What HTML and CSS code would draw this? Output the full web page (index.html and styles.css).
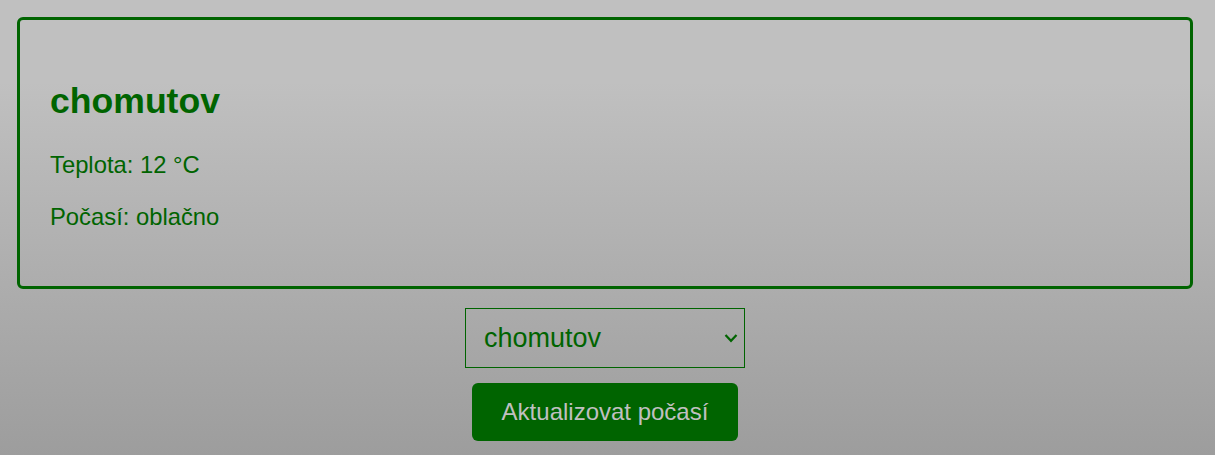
FILE: index.html
```html
<!DOCTYPE html>
<html lang="cs">
<head>
<meta charset="utf-8">
<title>Počasí</title>
<link rel="stylesheet" href="styles.css">
</head>
<body>
<main class="page">
  <section class="card">
    <h1 class="city">chomutov</h1>
    <p class="line">Teplota: 12 °C</p>
    <p class="line">Počasí: oblačno</p>
  </section>
  <div class="picker-wrap">
    <select class="picker">
      <option selected>chomutov</option>
      <option>praha</option>
      <option>brno</option>
    </select>
    <svg class="chevron" width="14" height="10" viewBox="0 0 14 10" aria-hidden="true">
      <polyline points="1.5,2 7,7.8 12.5,2" fill="none" stroke="#006400" stroke-width="2.2"/>
    </svg>
  </div>
  <button class="refresh" type="button">Aktualizovat počasí</button>
</main>
</body>
</html>
```
FILE: styles.css
```css
html {
  min-height: 100%;
  background: linear-gradient(to bottom, #c0c0c0 0%, #c0c0c0 18%, #9d9d9d 100%);
}
body {
  margin: 0;
  padding: 17px 22px 0 17px;
  font-family: "Liberation Sans", Arial, sans-serif;
  color: #006400;
}
.page {
  display: flex;
  flex-direction: column;
  align-items: center;
}
.card {
  align-self: stretch;
  border: 3px solid #006400;
  border-radius: 6px;
  padding: 61px 30px 56px;
}
.city {
  margin: 0 0 31px;
  font-size: 35.6px;
  line-height: 40px;
  font-weight: bold;
}
.line {
  margin: 0;
  font-size: 23.8px;
  line-height: 26px;
}
.line + .line {
  margin-top: 26px;
}
.picker-wrap {
  position: relative;
  margin-top: 19px;
  width: 280px;
  height: 60px;
}
.picker {
  -webkit-appearance: none;
  appearance: none;
  box-sizing: border-box;
  width: 280px;
  height: 60px;
  border: 1px solid #006400;
  border-radius: 0;
  background: transparent;
  color: #006400;
  font-family: "Liberation Sans", Arial, sans-serif;
  font-size: 27px;
  padding: 0 30px 0 18px;
}
.chevron {
  position: absolute;
  right: 7px;
  top: 25px;
  pointer-events: none;
}
.refresh {
  margin-top: 15px;
  height: 58px;
  padding: 0 30px;
  border: none;
  border-radius: 6px;
  background: #006400;
  color: #c0c0c0;
  font-family: "Liberation Sans", Arial, sans-serif;
  font-size: 24px;
  cursor: pointer;
}
```
